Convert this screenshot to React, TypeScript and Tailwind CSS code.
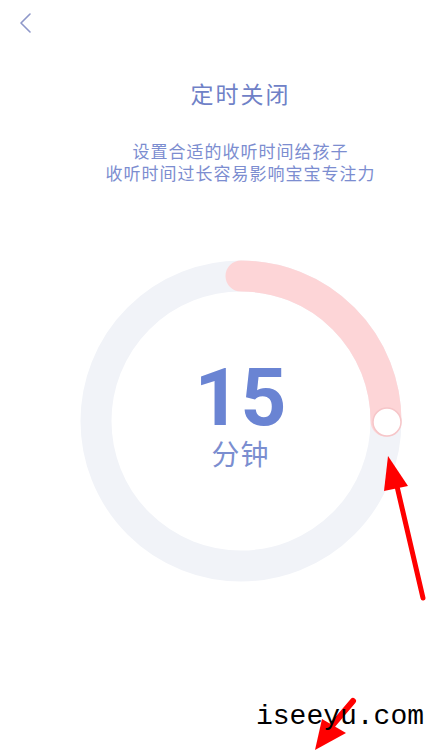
export default function App() {
  return (
    <div
      className="relative w-[445px] h-[750px] overflow-hidden bg-white"
      style={{ fontFamily: '"Noto Sans CJK SC", "Noto Sans", sans-serif' }}
    >
      {/* header */}
      <div className="h-[46px] flex items-center pl-[18px]">
        <svg width="14" height="20" viewBox="0 0 14 20" fill="none">
          <path d="M12 1 L3 10 L12 19" stroke="#8e97c9" strokeWidth="1.6" strokeLinecap="round" strokeLinejoin="round" />
        </svg>
      </div>

      <div className="flex flex-col items-center pl-[36px]">
        <h1 className="mt-[36px] text-[23px] leading-[23px] tracking-[2px] text-[#6f81c7]">定时关闭</h1>
        <div className="mt-[35px] flex flex-col items-center text-[17px] leading-[22px] tracking-[1px] text-[#7c8dd0]">
          <span>设置合适的收听时间给孩子</span>
          <span>收听时间过长容易影响宝宝专注力</span>
        </div>

        <div className="mt-[67px] grid place-items-center">
          <svg className="col-start-1 row-start-1" width="340" height="340" viewBox="0 0 340 340">
            <circle cx="170" cy="170" r="145" fill="none" stroke="#f1f3f8" strokeWidth="31" />
            <path d="M170 25 A145 145 0 0 1 315 170" fill="none" stroke="#fdd5d7" strokeWidth="31" strokeLinecap="round" />
            <circle cx="316" cy="171" r="14" fill="#ffffff" stroke="#f6c6c9" strokeWidth="1.5" />
          </svg>
          <div className="col-start-1 row-start-1 flex flex-col items-center -mt-[16px]">
            <span
              className="text-[80px] leading-[80px] font-bold text-[#6a84d3]"
              style={{ fontFamily: 'Roboto, "Noto Sans", sans-serif' }}
            >
              15
            </span>
            <span className="text-[28px] leading-[30px] tracking-[1px] text-[#7b8ed0]">分钟</span>
          </div>
        </div>
      </div>

      {/* annotation arrows */}
      <svg className="absolute left-0 top-0 pointer-events-none" width="445" height="750" viewBox="0 0 445 750">
        <line x1="423" y1="598" x2="396" y2="482" stroke="#ff0000" strokeWidth="5" strokeLinecap="round" />
        <polygon points="388,456 384,491 408,486" fill="#ff0000" />
        <line x1="353" y1="701" x2="330" y2="728" stroke="#ff0000" strokeWidth="6" strokeLinecap="round" />
        <polygon points="315,750 322,719 346,733" fill="#ff0000" />
      </svg>

      {/* watermark */}
      <span
        className="absolute left-[256px] top-[703px] text-[28px] leading-[28px] text-black"
        style={{ fontFamily: '"Liberation Mono", monospace' }}
      >
        iseeyu.com
      </span>
    </div>
  );
}
